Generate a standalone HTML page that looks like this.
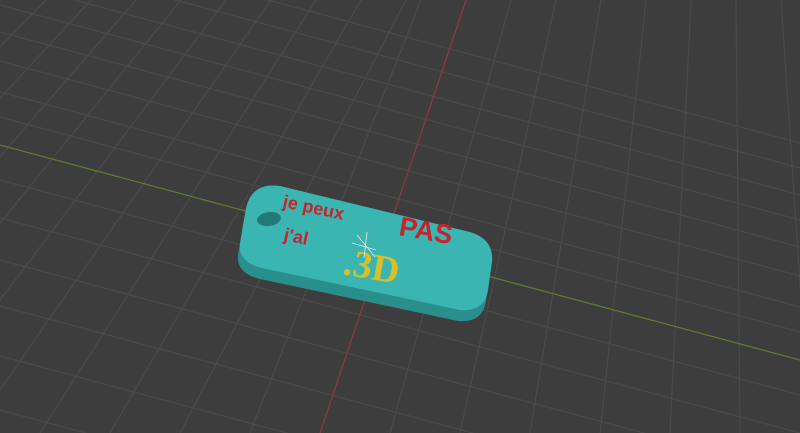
<!DOCTYPE html><html><head><style>html,body{margin:0;padding:0;background:#3d3d3d;width:800px;height:433px;overflow:hidden}svg{display:block}</style></head><body>
<svg width="800" height="433" viewBox="0 0 800 433" xmlns="http://www.w3.org/2000/svg">
<rect width="800" height="433" fill="#3d3d3d"/>
<g stroke="#4a4a4a" stroke-width="1.2">
<line x1="-44" y1="0" x2="-520" y2="433"/><line x1="1" y1="0" x2="-450" y2="433"/><line x1="46" y1="0" x2="-380" y2="433"/><line x1="91" y1="0" x2="-310" y2="433"/><line x1="136" y1="0" x2="-240" y2="433"/><line x1="181" y1="0" x2="-170" y2="433"/><line x1="226" y1="0" x2="-100" y2="433"/><line x1="271" y1="0" x2="-30" y2="433"/><line x1="316" y1="0" x2="40" y2="433"/><line x1="361" y1="0" x2="110" y2="433"/><line x1="406" y1="0" x2="180" y2="433"/><line x1="421" y1="0" x2="250" y2="433"/><line x1="511" y1="0" x2="390" y2="433"/><line x1="556" y1="0" x2="460" y2="433"/><line x1="601" y1="0" x2="530" y2="433"/><line x1="646" y1="0" x2="600" y2="433"/><line x1="691" y1="0" x2="670" y2="433"/><line x1="736" y1="0" x2="740" y2="433"/><line x1="781" y1="0" x2="810" y2="433"/>
<line x1="0" y1="-20" x2="800" y2="195"/><line x1="0" y1="5" x2="800" y2="220"/><line x1="0" y1="32" x2="800" y2="247"/><line x1="0" y1="61" x2="800" y2="276"/><line x1="0" y1="92" x2="800" y2="307"/><line x1="0" y1="117" x2="800" y2="332"/><line x1="0" y1="180" x2="800" y2="395"/><line x1="0" y1="218" x2="800" y2="433"/><line x1="0" y1="260" x2="800" y2="475"/><line x1="0" y1="306" x2="800" y2="521"/><line x1="0" y1="356" x2="800" y2="571"/><line x1="0" y1="410" x2="800" y2="625"/><line x1="0" y1="-47" x2="800" y2="168"/><line x1="0" y1="-72" x2="800" y2="143"/>
</g>
<line x1="466" y1="0" x2="320" y2="433" stroke="#8a3a3e" stroke-width="1.3"/>
<line x1="0" y1="145" x2="800" y2="360" stroke="#5f7a2c" stroke-width="1.3"/>
<path d="M280 186 L470 232 Q494 239 492 262 L488 290 Q485 312 460 310 L262 268 Q238 262 240 244 L246 208 Q252 182 280 186 Z" fill="#2a8f8c" transform="translate(-2,11)"/>
<path d="M280 186 L470 232 Q494 239 492 262 L488 290 Q485 312 460 310 L262 268 Q238 262 240 244 L246 208 Q252 182 280 186 Z" fill="#3bb5b1"/>
<ellipse cx="269" cy="219" rx="12" ry="7" fill="#227a77" transform="rotate(-8 269 219)"/>
<g font-family="Liberation Sans, sans-serif" font-weight="bold" fill="#c8232c">
<text x="282" y="207" font-size="18" transform="rotate(12 282 207)">je peux</text>
<text x="398" y="235" font-size="27" transform="rotate(10 398 235)">PAS</text>
<text x="283" y="240" font-size="18" transform="rotate(12 283 240)">j'al</text>
</g>
<text x="342" y="274" font-family="Liberation Serif, serif" font-weight="bold" font-size="38" fill="#d6c12a" transform="rotate(10 342 274)">.3D</text>
<g stroke="#e8e8e8" stroke-width="0.8"><line x1="352" y1="243" x2="376" y2="250"/><line x1="367" y1="232" x2="364" y2="258"/><line x1="357" y1="235" x2="375" y2="257"/></g>
</svg>
</body></html>
